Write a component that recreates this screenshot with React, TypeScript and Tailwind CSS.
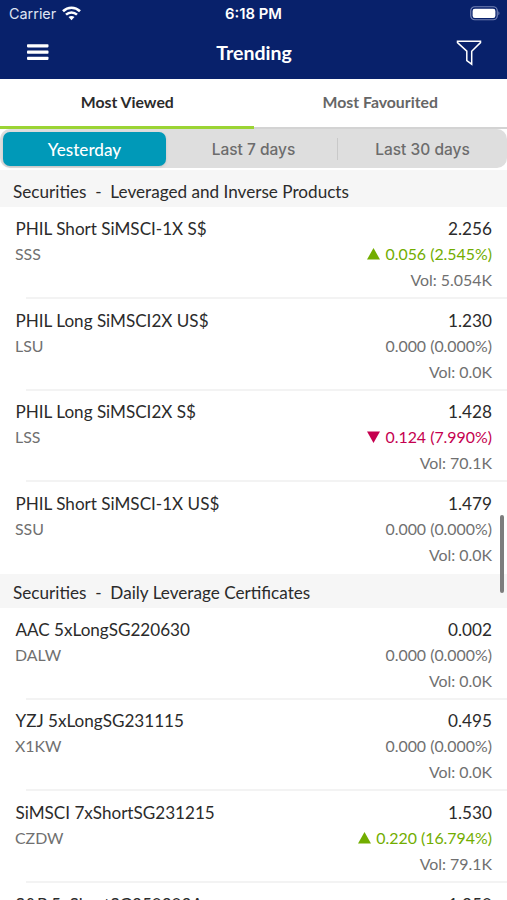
interface Stock {
  name: string;
  code: string;
  price: string;
  change: string;
  trend?: "up" | "down";
  volume: string;
}

interface Section {
  title: string;
  stocks: Stock[];
}

const sections: Section[] = [
  {
    title: "Leveraged and Inverse Products",
    stocks: [
      { name: "PHIL Short SiMSCI-1X S$", code: "SSS", price: "2.256", change: "0.056 (2.545%)", trend: "up", volume: "5.054K" },
      { name: "PHIL Long SiMSCI2X US$", code: "LSU", price: "1.230", change: "0.000 (0.000%)", volume: "0.0K" },
      { name: "PHIL Long SiMSCI2X S$", code: "LSS", price: "1.428", change: "0.124 (7.990%)", trend: "down", volume: "70.1K" },
      { name: "PHIL Short SiMSCI-1X US$", code: "SSU", price: "1.479", change: "0.000 (0.000%)", volume: "0.0K" },
    ],
  },
  {
    title: "Daily Leverage Certificates",
    stocks: [
      { name: "AAC 5xLongSG220630", code: "DALW", price: "0.002", change: "0.000 (0.000%)", volume: "0.0K" },
      { name: "YZJ 5xLongSG231115", code: "X1KW", price: "0.495", change: "0.000 (0.000%)", volume: "0.0K" },
      { name: "SiMSCI 7xShortSG231215", code: "CZDW", price: "1.530", change: "0.220 (16.794%)", trend: "up", volume: "79.1K" },
      { name: "S&P 5xShortSG250203A", code: "DQJW", price: "1.250", change: "0.000 (0.000%)", volume: "0.0K" },
    ],
  },
];

const StatusBar = () => (
  <div className="relative flex h-[27px] items-center justify-between pl-[9px] pr-[7px] font-['Inter',sans-serif]">
    <div className="flex items-center gap-1.5">
      <span className="text-[14.4px] text-[#dfe4f2]">Carrier</span>
      <svg width="19" height="15" viewBox="0 0 19 15" fill="none" stroke="#fff" strokeWidth="2.6">
        <path d="M1 5.2C5.8.6 13.2.6 18 5.2" />
        <path d="M4 8.6c3.2-2.9 7.8-2.9 11 0" />
        <path d="M6.5 11c1.7-1.5 4.3-1.5 6 0l-3 3.2Z" fill="#fff" stroke="none" />
      </svg>
    </div>
    <span className="absolute inset-x-0 top-[3px] text-center text-[14.8px] font-semibold text-white">
      6:18 PM
    </span>
    <svg width="30" height="15" viewBox="0 0 30 15" fill="none">
      <rect x=".75" y=".75" width="26.5" height="13" rx="4" stroke="#7483b5" strokeWidth="1.2" />
      <rect x="2.6" y="2.7" width="22.8" height="9.2" rx="2.2" fill="#fff" />
      <path d="M28.4 5.2c1.4.7 1.4 3.4 0 4.1Z" fill="#7483b5" />
    </svg>
  </div>
);

const Header = () => (
  <header className="h-[79px] bg-[#08216b]">
    <StatusBar />
    <div className="flex h-[52px] items-center justify-between pl-[27px] pr-[25px]">
      <svg width="22" height="18" viewBox="0 0 22 18" fill="#fff">
        <rect y=".3" width="21.5" height="3.1" rx=".8" />
        <rect y="6.6" width="21.5" height="3.1" rx=".8" />
        <rect y="12.8" width="21.5" height="3.1" rx=".8" />
      </svg>
      <h1 className="pl-[3px] text-[19.5px] font-bold text-white">Trending</h1>
      <svg width="26" height="26" viewBox="0 0 26 26" fill="none" stroke="#fff" strokeWidth="1.5">
        <path d="M1.5 1.2h23v1.4l-8.8 8.6v13l-4.9-3.6v-9.4L1.5 2.6Z" />
      </svg>
    </div>
  </header>
);

const Tabs = () => (
  <nav className="grid h-[50px] grid-cols-2 text-center text-[15.8px] font-bold">
    <button className="border-b-[3px] border-[#9bd434] pb-px pl-px text-[#2b2b2b]">Most Viewed</button>
    <button className="border-b-2 border-[#d3d3d3] pb-0.5 text-[#666]">Most Favourited</button>
  </nav>
);

const PeriodPicker = () => (
  <div className="flex h-[39px] items-center rounded-[10px] bg-[#dedede] pl-[3px] text-center text-[15.5px] font-medium text-[#6c6c6c] font-['Inter',sans-serif]">
    <button className="h-[34px] w-[163px] rounded-[7px] bg-[#0099b8] pt-0.5 font-['Lato',sans-serif] text-[17.1px] text-white shadow">
      Yesterday
    </button>
    <button className="w-[171px] pl-1 pt-0.5">Last 7 days</button>
    <span className="h-[22px] w-px bg-[#c9c9c9]" />
    <button className="flex-1 pt-0.5">Last 30 days</button>
  </div>
);

const Trend = ({ trend }: { trend: "up" | "down" }) => (
  <svg width="13" height="12" viewBox="0 0 13 12" fill="currentColor">
    {trend === "up" ? <path d="M6.5 0 13 11.5H0Z" /> : <path d="M0 .5h13L6.5 12Z" />}
  </svg>
);

const changeColor = {
  up: "text-[#72ad00]",
  down: "text-[#c5004f]",
  none: "text-[#707070]",
};

const StockRow = ({ stock, last }: { stock: Stock; last: boolean }) => (
  <li className="h-[91.67px]">
    <div className="flex h-[90px] justify-between px-[15px] pt-2 text-[15.9px] text-[#707070]">
      <div>
        <p className="h-[26px] pl-[0.5px] text-[17.1px] leading-[27px] text-[#2b2b2b]">{stock.name}</p>
        <p className="leading-[26px]">{stock.code}</p>
      </div>
      <div className="text-right">
        <p className="h-[26px] text-[17.2px] leading-[27px] text-[#2b2b2b]">{stock.price}</p>
        <p className={`flex items-center justify-end gap-[5px] leading-[26px] ${changeColor[stock.trend ?? "none"]}`}>
          {stock.trend && <Trend trend={stock.trend} />}
          {stock.change}
        </p>
        <p className="leading-[25px]">Vol: {stock.volume}</p>
      </div>
    </div>
    {!last && <div className="ml-[26px] h-[2px] bg-[#f3f3f3]" />}
  </li>
);

export default function App() {
  return (
    <div className="relative h-[900px] w-[507px] overflow-hidden bg-white font-['Lato',sans-serif]">
      <Header />
      <Tabs />
      <PeriodPicker />
      <main className="pt-[2px]">
        {sections.map((section, index) => (
          <section key={section.title}>
            <h2
              className={`flex items-end whitespace-pre bg-[#f6f6f6] pb-[2px] pl-[13px] text-[17.15px] leading-[26px] text-[#2b2b2b] ${
                index === 0 ? "h-[37px]" : "h-[34px]"
              }`}
            >
              {`Securities  -  ${section.title}`}
            </h2>
            <ul>
              {section.stocks.map((stock, i) => (
                <StockRow key={stock.code} stock={stock} last={i === section.stocks.length - 1} />
              ))}
            </ul>
          </section>
        ))}
      </main>
      <div className="absolute right-[3px] top-[515px] h-[78px] w-1 rounded-full bg-[#7d7d7d]" />
    </div>
  );
}
